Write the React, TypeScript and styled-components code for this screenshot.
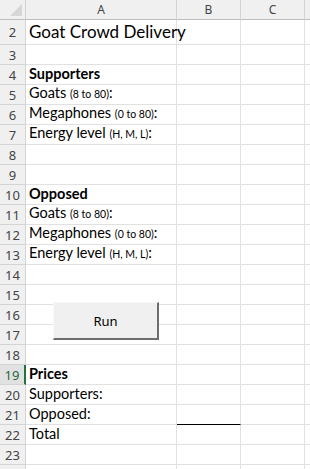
import React from "react";
import styled, { createGlobalStyle } from "styled-components";

const GlobalStyle = createGlobalStyle`
  html, body {
    margin: 0;
    padding: 0;
    background: #ffffff;
  }
  body {
    font-family: "Lato", "Liberation Sans", sans-serif;
    color: #000;
  }
`;

const Wrapper = styled.div`
  position: relative;
  width: 310px;
  height: 469px;
  overflow: hidden;
`;

const Grid = styled.div`
  display: grid;
  grid-template-columns: 26px 151px 64px 64px 64px;
  grid-template-rows: 20px 25px repeat(22, 20px);
`;

const Corner = styled.div`
  position: relative;
  background: #f0f0f0;
  border-right: 1px solid #d4d4d4;
  border-bottom: 1px solid #bdbdbd;
  box-sizing: border-box;

  &::after {
    content: "";
    position: absolute;
    right: 3px;
    bottom: 3px;
    width: 0;
    height: 0;
    border-left: 12px solid transparent;
    border-bottom: 12px solid #d6d6d6;
  }
`;

const ColHead = styled.div`
  display: flex;
  align-items: center;
  justify-content: center;
  background: #f0f0f0;
  border-right: 1px solid #d4d4d4;
  border-bottom: 1px solid #bdbdbd;
  box-sizing: border-box;
  font-family: "Noto Sans", sans-serif;
  font-size: 12px;
  color: #444;
`;

const RowHead = styled.div<{ $active?: boolean }>`
  display: flex;
  align-items: center;
  justify-content: center;
  background: ${(p) => (p.$active ? "#e1e1e1" : "#f0f0f0")};
  border-right: ${(p) => (p.$active ? "2px solid #217346" : "1px solid #d4d4d4")};
  border-bottom: 1px solid #d4d4d4;
  box-sizing: border-box;
  font-family: "Noto Sans", sans-serif;
  font-size: 13px;
  color: ${(p) => (p.$active ? "#1e6a40" : "#444")};
`;

const Cell = styled.div<{ $bold?: boolean; $title?: boolean; $under?: boolean }>`
  display: flex;
  align-items: flex-end;
  padding: 0 0 1px 3px;
  border-right: 1px solid #e1e1e1;
  border-bottom: ${(p) => (p.$under ? "1px solid #000" : "1px solid #e1e1e1")};
  box-sizing: border-box;
  white-space: nowrap;
  overflow: visible;
  font-size: ${(p) => (p.$title ? "17px" : "14.5px")};
  font-weight: ${(p) => (p.$bold ? 700 : 400)};
  line-height: ${(p) => (p.$title ? "23px" : "18px")};
  z-index: ${(p) => (p.$title ? 1 : 0)};
`;

const Small = styled.span`
  font-size: 10.5px;
`;

const RunButton = styled.button`
  position: absolute;
  left: 53px;
  top: 302px;
  width: 106px;
  height: 38px;
  background: #f0f0f0;
  border: none;
  border-top: 1px solid #f8f8f8;
  border-left: 1px solid #f8f8f8;
  border-right: 2px solid #6d6d6d;
  border-bottom: 2px solid #6d6d6d;
  box-sizing: border-box;
  font-family: "Noto Sans", sans-serif;
  font-size: 13px;
  color: #000;
  padding: 0;
`;

type Row = {
  n: number;
  a?: React.ReactNode;
  bold?: boolean;
  title?: boolean;
  underB?: boolean;
};

const rows: Row[] = [
  { n: 2, a: "Goat Crowd Delivery", title: true },
  { n: 3 },
  { n: 4, a: "Supporters", bold: true },
  { n: 5, a: <>Goats <Small>(8 to 80)</Small>:</> },
  { n: 6, a: <>Megaphones <Small>(0 to 80)</Small>:</> },
  { n: 7, a: <>Energy level <Small>(H, M, L)</Small>:</> },
  { n: 8 },
  { n: 9 },
  { n: 10, a: "Opposed", bold: true },
  { n: 11, a: <>Goats <Small>(8 to 80)</Small>:</> },
  { n: 12, a: <>Megaphones <Small>(0 to 80)</Small>:</> },
  { n: 13, a: <>Energy level <Small>(H, M, L)</Small>:</> },
  { n: 14 },
  { n: 15 },
  { n: 16 },
  { n: 17 },
  { n: 18 },
  { n: 19, a: "Prices", bold: true },
  { n: 20, a: "Supporters:" },
  { n: 21, a: "Opposed:", underB: true },
  { n: 22, a: "Total" },
  { n: 23 },
  { n: 24 },
];

const App = () => {
  return (
    <Wrapper>
      <GlobalStyle />
      <Grid>
        <Corner />
        <ColHead>A</ColHead>
        <ColHead>B</ColHead>
        <ColHead>C</ColHead>
        <ColHead />
        {rows.map((r) => (
          <React.Fragment key={r.n}>
            <RowHead $active={r.n === 19}>{r.n < 24 ? r.n : ""}</RowHead>
            <Cell $bold={r.bold} $title={r.title}>
              {r.a && <span>{r.a}</span>}
            </Cell>
            <Cell $under={r.underB} />
            <Cell />
            <Cell />
          </React.Fragment>
        ))}
      </Grid>
      <RunButton>Run</RunButton>
    </Wrapper>
  );
};

export default App;
